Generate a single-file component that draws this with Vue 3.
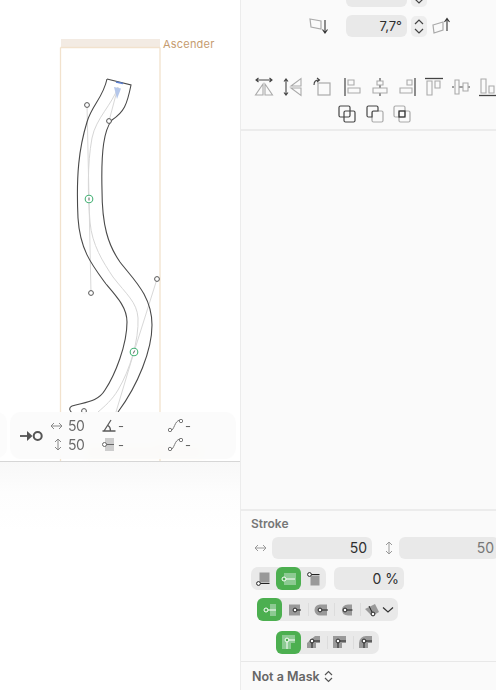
<template>
  <div class="app">
    <div class="canvas">
      <div class="viewport">
        <svg class="glyph" width="240" height="461" viewBox="0 0 240 461">
          <rect x="61" y="39" width="99" height="8" fill="#f3ebe3" />
          <path d="M60.5 47.5H160M60.5 47.5V461M160 47.5V461" fill="none" stroke="#f2e2cd" stroke-width="1.3" />
          <path d="M118 87C112 105 96 118 92 138C87 165 88 195 90 222C92 245 103 262 113 277C126 294 137 302 138 318C139 340 130 370 118 390C112 400 105 406 98 412" fill="none" stroke="#d6d6d6" />
          <path d="M87 105L89 199L91 293M109 121L118 87M157 279L134 352L116 412" fill="none" stroke="#d8d8d8" />
          <path d="M107 79C103 98 92 105 87 122C79 148 76 175 78 218C80 250 92 265 106 284C118 298 127 308 127 322C127 345 115 375 105 390C98 402 85 402 72 406C68 408 70 411 72 413" fill="none" stroke="#4a4a4a" stroke-width="1.1" />
          <path d="M107 79L131 85C127 105 124 112 112 120C104 130 101 150 102 190C102 225 108 245 120 262C132 278 152 295 152 325C152 350 138 385 118 412" fill="none" stroke="#4a4a4a" stroke-width="1.1" />
          <path d="M116 82L123 83.5" stroke="#5b7fd0" stroke-width="1.5" />
          <path d="M114 87L121 88.5L117 99Z" fill="#b5c7ea" />
          <g fill="#fff" stroke="#555" stroke-width="1">
            <circle cx="87" cy="105" r="2.4" />
            <circle cx="109" cy="121" r="2.4" />
            <circle cx="91" cy="293" r="2.4" />
            <circle cx="157" cy="279" r="2.4" />
            <circle cx="84" cy="411" r="2.4" />
          </g>
          <g fill="#fff" stroke="#48b277" stroke-width="1.1">
            <circle cx="89" cy="199" r="3.8" />
            <circle cx="134" cy="352" r="3.8" />
          </g>
          <path d="M89 197.5V200.5M133.3 353.5L134.7 350.5" stroke="#333" stroke-width=".8" />
        </svg>
        <span class="metric-name">Ascender</span>
        <div class="orange-glow"></div>
        <div class="tool-stub"></div>
        <div class="toolbar">
          <svg class="node-tool" width="23" height="16" viewBox="0 0 23 16">
            <path d="M0 8H9" fill="none" stroke="#555" stroke-width="1.8" />
            <path d="M7 3L12.500 8L7 13Z" fill="#555" />
            <circle cx="17.700" cy="8" r="4" fill="none" stroke="#555" stroke-width="2" />
          </svg>
          <div class="toolbar-grid">
            <svg width="13" height="10" viewBox="0 0 13 10"><path d="M1 5H12M4 2L1 5L4 8M9 2L12 5L9 8" fill="none" stroke="#888" /></svg>
            <span class="t-num">50</span>
            <svg width="14" height="13" viewBox="0 0 14 13"><path d="M9 1L2 12M0.500 12H13.500M6 6.500C7.800 7.500 8.500 9.500 8.500 12" fill="none" stroke="#5a5a5a" stroke-width="1.300" /></svg>
            <span class="t-dash">-</span>
            <svg width="15" height="13" viewBox="0 0 15 13"><path d="M2 12C7 11 6 2 12 1" fill="none" stroke="#777" /><circle cx="2" cy="11" r="1.700" fill="#fff" stroke="#777" /><circle cx="13" cy="2" r="1.700" fill="#fff" stroke="#777" /></svg>
            <span class="t-dash">-</span>
            <svg class="v-arrow" width="10" height="13" viewBox="0 0 10 13"><path d="M5 1V12M2 4L5 1L8 4M2 9L5 12L8 9" fill="none" stroke="#888" /></svg>
            <span class="t-num">50</span>
            <svg width="14" height="13" viewBox="0 0 14 13"><rect x="3" y="0" width="9" height="13" fill="#cdcdcd" /><path d="M2.500 6.500H12" stroke="#666" /><circle cx="2.500" cy="6.500" r="2" fill="#fff" stroke="#666" /></svg>
            <span class="t-dash">-</span>
            <svg width="15" height="13" viewBox="0 0 15 13"><path d="M2 12C7 11 6 2 12 1" fill="none" stroke="#777" /><circle cx="2" cy="11" r="1.700" fill="#fff" stroke="#777" /><circle cx="13" cy="2" r="1.700" fill="#fff" stroke="#777" /></svg>
            <span class="t-dash">-</span>
          </div>
        </div>
      </div>
      <div class="lower"></div>
    </div>

    <aside class="panel">
      <section class="transform">
        <div class="skew-row first">
          <svg class="skew" width="22" height="20" viewBox="0 0 22 20"><path d="M5 1L17 1L15 12L7 12Z" fill="none" stroke="#aaa" stroke-width="1.200" /></svg>
          <div class="field small"></div>
          <div class="stepper"><svg width="10" height="8" viewBox="0 0 10 8"><path d="M1 6L5 2L9 6" fill="none" stroke="#444" stroke-width="1.200" /></svg><svg width="10" height="8" viewBox="0 0 10 8"><path d="M1 2L5 6L9 2" fill="none" stroke="#444" stroke-width="1.200" /></svg></div>
          <svg class="skew" width="22" height="20" viewBox="0 0 22 20"><path d="M5 1L15 1L12 12L4 12Z" fill="none" stroke="#aaa" stroke-width="1.200" /></svg>
        </div>
        <div class="skew-row">
          <svg class="skew" width="22" height="20" viewBox="0 0 22 20"><path d="M1 3L12 5V13L2 11Z" fill="none" stroke="#aaa" stroke-width="1.200" /><path d="M16 4V16M13.500 13.500L16 17L18.500 13.500" fill="none" stroke="#333" stroke-width="1.100" /></svg>
          <div class="field small">7,7°</div>
          <div class="stepper"><svg width="10" height="8" viewBox="0 0 10 8"><path d="M1 6L5 2L9 6" fill="none" stroke="#444" stroke-width="1.200" /></svg><svg width="10" height="8" viewBox="0 0 10 8"><path d="M1 2L5 6L9 2" fill="none" stroke="#444" stroke-width="1.200" /></svg></div>
          <svg class="skew" width="22" height="20" viewBox="0 0 22 20"><path d="M1 9L11 6V14L2 17Z" fill="none" stroke="#aaa" stroke-width="1.200" /><path d="M15 15V3M12.500 6L15 2.500L17.500 6" fill="none" stroke="#333" stroke-width="1.100" /></svg>
        </div>
        <div class="align-row">
          <div class="icon-group flips">
            <svg width="20" height="20" viewBox="0 0 20 20"><path d="M2 3H18M4.500 1L2 3L4.500 5M15.500 1L18 3L15.500 5" fill="none" stroke="#444" stroke-width="1.100" /><path d="M9 7V18H1.500ZM11 7V18H18.500Z" fill="none" stroke="#aaa" stroke-width="1.100" /></svg>
            <svg width="20" height="20" viewBox="0 0 20 20"><path d="M3 2V18M1 4.500L3 2L5 4.500M1 15.500L3 18L5 15.500" fill="none" stroke="#444" stroke-width="1.100" /><path d="M18 1.500V9H8ZM18 11V18.500L8 11Z" fill="none" stroke="#aaa" stroke-width="1.100" /></svg>
            <svg width="20" height="20" viewBox="0 0 20 20"><rect x="6" y="6" width="12" height="12" fill="none" stroke="#aaa" stroke-width="1.200" /><path d="M2 8C2 4 4 3 7 3M5 1L7.500 3L5 5" fill="none" stroke="#444" stroke-width="1.100" /></svg>
          </div>
          <div class="icon-group aligns">
            <svg width="20" height="20" viewBox="0 0 20 20"><path d="M2 1V19" stroke="#444" stroke-width="1.200" /><path d="M5 3H11V8H5ZM5 11H17V16H5Z" fill="none" stroke="#aaa" stroke-width="1.100" /></svg>
            <svg width="20" height="20" viewBox="0 0 20 20"><path d="M10 1V4M10 8V11M10 16V19" stroke="#444" stroke-width="1.100" /><path d="M7 4H13V8H7ZM3 11H17V16H3Z" fill="none" stroke="#aaa" stroke-width="1.100" /></svg>
            <svg width="20" height="20" viewBox="0 0 20 20"><path d="M18 1V19" stroke="#444" stroke-width="1.200" /><path d="M10 3H15V8H10ZM3 11H15V16H3Z" fill="none" stroke="#aaa" stroke-width="1.100" /></svg>
            <svg width="20" height="20" viewBox="0 0 20 20"><path d="M1 1.500H19" stroke="#444" stroke-width="1.300" /><path d="M3 4H8V18H3ZM11 4H16V11H11Z" fill="none" stroke="#aaa" stroke-width="1.100" /></svg>
            <svg width="20" height="20" viewBox="0 0 20 20"><path d="M1 10H3M8 10H12M17 10H19" stroke="#444" stroke-width="1.100" /><path d="M4 3H8V17H4ZM12 6H17V14H12Z" fill="none" stroke="#aaa" stroke-width="1.100" /></svg>
            <svg width="20" height="20" viewBox="0 0 20 20"><path d="M1 18.500H19" stroke="#444" stroke-width="1.300" /><path d="M3 2H8V16H3ZM11 9H16V16H11Z" fill="none" stroke="#aaa" stroke-width="1.100" /></svg>
          </div>
        </div>
        <div class="bool-row">
          <svg width="19" height="19" viewBox="0 0 19 19"><rect x="1" y="1" width="11" height="11" rx="1.500" fill="none" stroke="#444" stroke-width="1.200" /><rect x="6" y="6" width="11" height="11" rx="1.500" fill="none" stroke="#444" stroke-width="1.200" /></svg>
          <svg width="19" height="19" viewBox="0 0 19 19"><rect x="6" y="6" width="11" height="11" rx="1.500" fill="none" stroke="#aaa" stroke-width="1.200" /><path d="M6 12H2.500Q1 12 1 10.500V2.500Q1 1 2.500 1H10.500Q12 1 12 2.500V6H7.500Q6 6 6 7.500Z" fill="#fafafa" stroke="#444" stroke-width="1.200" /></svg>
          <svg width="19" height="19" viewBox="0 0 19 19"><rect x="1" y="1" width="11" height="11" rx="1.500" fill="none" stroke="#aaa" stroke-width="1.200" /><rect x="6" y="6" width="11" height="11" rx="1.500" fill="none" stroke="#aaa" stroke-width="1.200" /><rect x="6" y="6" width="6" height="6" fill="none" stroke="#333" stroke-width="1.200" /></svg>
        </div>
      </section>

      <div class="spacer"></div>

      <section class="stroke">
        <h3>Stroke</h3>
        <div class="size-row">
          <svg width="13" height="10" viewBox="0 0 13 10"><path d="M1 5H12M4 2L1 5L4 8M9 2L12 5L9 8" fill="none" stroke="#999" /></svg>
          <div class="field wide">50</div>
          <svg class="size-v" width="10" height="14" viewBox="0 0 10 14"><path d="M5 1V13M2 4L5 1L8 4M2 10L5 13L8 10" fill="none" stroke="#999" /></svg>
          <div class="field wide muted">50</div>
        </div>
        <div class="pos-row">
          <div class="seg">
            <button class="seg-btn"><svg width="20" height="18" viewBox="0 0 20 18"><rect x="5.500" y="2.500" width="10" height="10" fill="#999" /><path d="M4.500 13.500H15.500" stroke="#222" /><circle cx="4.500" cy="13.500" r="1.900" fill="#fff" stroke="#222" /></svg></button>
            <button class="seg-btn on"><svg width="20" height="18" viewBox="0 0 20 18"><rect x="5" y="3" width="12" height="12" fill="#8cca92" /><path d="M5 9H16" stroke="#fff" /><circle cx="5" cy="9" r="2" fill="#4caf50" stroke="#fff" /></svg></button>
            <button class="seg-btn"><svg width="20" height="18" viewBox="0 0 20 18"><rect x="6.500" y="5.500" width="9" height="10" fill="#999" /><path d="M5.500 4.500H15.500" stroke="#222" /><circle cx="5.500" cy="4.500" r="1.900" fill="#fff" stroke="#222" /></svg></button>
          </div>
          <div class="field percent">0 %</div>
        </div>
        <div class="cap-row">
          <div class="seg">
            <button class="seg-btn on"><svg width="20" height="16" viewBox="0 0 20 16"><rect x="10" y="2" width="6" height="12" fill="#8cca92" /><path d="M6 8H16" stroke="#fff" /><circle cx="6" cy="8" r="2" fill="#4caf50" stroke="#fff" /></svg></button>
            <span class="cap-btn"><svg width="20" height="16" viewBox="0 0 20 16"><rect x="4" y="2.500" width="11" height="11" fill="#999" /><path d="M10 8H16" stroke="#222" /><circle cx="10" cy="8" r="1.900" fill="#fff" stroke="#222" /></svg></span>
            <i class="sep"></i>
            <span class="cap-btn"><svg width="20" height="16" viewBox="0 0 20 16"><path d="M16 2.500H9A5.500 5.500 0 0 0 9 13.500H16Z" fill="#999" /><path d="M9 8H17" stroke="#222" /><circle cx="9" cy="8" r="1.900" fill="#fff" stroke="#222" /></svg></span>
            <i class="sep"></i>
            <span class="cap-btn"><svg width="20" height="16" viewBox="0 0 20 16"><path d="M15 2.500H11Q5 3 5 8Q5 13 11 13.500H15Z" fill="#999" /><path d="M8 8H15.500" stroke="#222" /><circle cx="8" cy="8" r="1.900" fill="#fff" stroke="#222" /></svg></span>
            <i class="sep"></i>
            <span class="cap-btn"><svg width="20" height="18" viewBox="0 0 20 18"><path d="M2 8L12 3L16 11L9 15Z" fill="#999" /><path d="M6 5L10 13" stroke="#222" /><circle cx="10" cy="13" r="1.900" fill="#fff" stroke="#222" /></svg></span>
            <svg class="chev" width="12" height="8" viewBox="0 0 12 8"><path d="M1 1.500L6 6L11 1.500" fill="none" stroke="#333" stroke-width="1.200" /></svg>
          </div>
        </div>
        <div class="corner-row">
          <div class="seg">
            <button class="seg-btn on"><svg width="20" height="20" viewBox="0 0 20 20"><path d="M3 3H16V11H12V17H3Z" fill="#8cca92" /><path d="M8 8H16M8 8V17" stroke="#fff" /><circle cx="8" cy="8" r="1.900" fill="#4caf50" stroke="#fff" /></svg></button>
            <span class="cap-btn"><svg width="20" height="20" viewBox="0 0 20 20"><path d="M16 4H11L3 11V16H12V11H16Z" fill="#999" /><path d="M16 9H8M8 9V16" stroke="#222" /><circle cx="8" cy="9" r="1.900" fill="#fff" stroke="#222" /></svg></span>
            <i class="sep"></i>
            <span class="cap-btn"><svg width="20" height="20" viewBox="0 0 20 20"><path d="M16 4H3V16H12V11H16Z" fill="#999" /><path d="M16 9H8M8 9V16" stroke="#222" /><circle cx="8" cy="9" r="1.900" fill="#fff" stroke="#222" /></svg></span>
            <i class="sep"></i>
            <span class="cap-btn"><svg width="20" height="20" viewBox="0 0 20 20"><path d="M16 4H10A7 7 0 0 0 3 11V16H12V11H16Z" fill="#999" /><path d="M16 9H8M8 9V16" stroke="#222" /><circle cx="8" cy="9" r="1.900" fill="#fff" stroke="#222" /></svg></span>
          </div>
        </div>
      </section>

      <footer class="mask">
        <span>Not a Mask</span>
        <svg width="9" height="13" viewBox="0 0 9 13"><path d="M1 5L4.500 1.500L8 5M1 8L4.500 11.500L8 8" fill="none" stroke="#555" stroke-width="1.200" /></svg>
      </footer>
    </aside>
  </div>
</template>

<script setup>
</script>

<style>
html, body {
  margin: 0;
  overflow: hidden;
}
</style>

<style scoped>
.app {
  display: flex;
  width: 496px;
  height: 690px;
  overflow: hidden;
  background: #fff;
  font-family: Inter, "Liberation Sans", sans-serif;
}

.canvas {
  width: 240px;
  flex: none;
  display: flex;
  flex-direction: column;
}

.viewport {
  position: relative;
  height: 461px;
  flex: none;
  overflow: hidden;
  background: #fff;
  border-bottom: 1px solid #d6d6d6;
}

.glyph {
  position: absolute;
  left: 0;
  top: 0;
}

.metric-name {
  position: absolute;
  left: 163px;
  top: 37px;
  font-size: 11px;
  letter-spacing: .2px;
  color: #c69c70;
}

.orange-glow {
  position: absolute;
  left: 85px;
  top: 447px;
  width: 118px;
  height: 9px;
  background: #fdf0dc;
  filter: blur(3px);
}

.tool-stub {
  position: absolute;
  left: -30px;
  top: 412px;
  width: 37px;
  height: 46px;
  border-radius: 10px;
  background: rgba(252, 252, 252, .9);
}

.toolbar {
  position: absolute;
  left: 10px;
  top: 412px;
  width: 226px;
  height: 47px;
  box-sizing: border-box;
  padding-left: 10px;
  display: flex;
  align-items: center;
  border-radius: 11px;
  background: rgba(251, 251, 251, .88);
  backdrop-filter: blur(4px);
}

.node-tool {
  flex: none;
  margin-right: 7px;
}

.toolbar-grid {
  display: grid;
  grid-template-columns: 18px 34px 16px 50px 17px 12px;
  grid-auto-rows: 19px;
  align-items: center;
  justify-items: start;
  margin-top: -1px;
}

.v-arrow {
  margin-left: 3px;
}

.t-num {
  font-size: 14px;
  letter-spacing: -.4px;
  color: #6a6a6a;
}

.t-dash {
  font-size: 13px;
  color: #666;
}

.panel {
  width: 256px;
  flex: none;
  display: flex;
  flex-direction: column;
  box-sizing: border-box;
  border-left: 1px solid #ececec;
  background: #fafafa;
}

.transform {
  height: 131px;
  flex: none;
  box-sizing: border-box;
  border-bottom: 2px solid #ececec;
}

.skew-row {
  display: flex;
  align-items: center;
  height: 22px;
  padding-left: 68px;
  margin-bottom: 8px;
}

.skew-row.first {
  margin-top: -15px;
}

.skew {
  flex: none;
}

.field {
  box-sizing: border-box;
  background: #e9e9e9;
  border-radius: 6px;
  text-align: right;
  color: #2e2e2e;
  font-size: 13px;
}

.field.small {
  width: 61px;
  height: 22px;
  line-height: 22px;
  padding-right: 5px;
  margin-left: 15px;
}

.stepper {
  width: 16px;
  height: 21px;
  margin: 0 5px 0 4px;
  border-radius: 5px;
  background: #eeeeee;
  display: flex;
  flex-direction: column;
  align-items: center;
  justify-content: center;
  gap: 1px;
}

.stepper svg {
  display: block;
}

.align-row {
  display: flex;
  margin: 40px 0 0 13px;
  white-space: nowrap;
}

.icon-group {
  display: flex;
  flex: none;
}

.flips {
  gap: 9px;
  margin-right: 11px;
}

.aligns {
  gap: 7px;
}

.bool-row {
  display: flex;
  justify-content: flex-start;
  gap: 8.500px;
  margin: 8px 0 0 97px;
}

.spacer {
  flex: 1;
}

.stroke {
  height: 153px;
  flex: none;
  box-sizing: border-box;
  padding-top: 5px;
  border-top: 2px solid #ececec;
  border-bottom: 1px solid #e8e8e8;
}

h3 {
  margin: 0 0 6px 10px;
  font-size: 12px;
  line-height: 15px;
  font-weight: 600;
  color: #777;
}

.size-row {
  display: flex;
  align-items: center;
  margin-left: 13px;
  width: 300px;
}

.field.wide {
  width: 100px;
  height: 22px;
  line-height: 22px;
  padding-right: 5px;
  margin-left: 5px;
  font-size: 14px;
  flex: none;
}

.size-v {
  margin: 0 5px 0 12px;
}

.field.muted {
  color: #777;
}

.size-row .field.muted {
  margin-left: 0;
}

.pos-row {
  display: flex;
  margin: 8px 0 0 10px;
  gap: 8px;
}

.seg {
  display: inline-flex;
  align-items: center;
  height: 23px;
  border-radius: 7px;
  background: #e9e9e9;
}

.seg-btn {
  width: 25px;
  height: 23px;
  padding: 0;
  border: 0;
  background: none;
  display: flex;
  align-items: center;
  justify-content: center;
  border-radius: 6px;
}

.seg-btn.on {
  background: #4caf50;
}

.field.percent {
  width: 70px;
  height: 23px;
  line-height: 23px;
  padding-right: 5px;
  font-size: 14px;
}

.cap-row {
  margin: 8px 0 0 16px;
}

.corner-row {
  margin: 9px 0 0 35px;
}

.seg-btn.on + .cap-btn {
  margin-left: 1px;
}

.cap-btn {
  width: 24px;
  display: flex;
  align-items: center;
  justify-content: center;
}

.corner-row .seg {
  padding-right: 1px;
}

.sep {
  width: 1px;
  height: 13px;
  background: #dcdcdc;
  margin: 0 .5px;
}

.chev {
  margin: 0 4px 0 -3px;
}

.mask {
  height: 28px;
  flex: none;
  display: flex;
  align-items: center;
  gap: 4px;
  padding-left: 11px;
  font-size: 12.500px;
  font-weight: 600;
  color: #666;
}

.lower {
  flex: 1;
  background: linear-gradient(#f8f8f8, #fdfdfd 30px, #fff 70px);
}
</style>
